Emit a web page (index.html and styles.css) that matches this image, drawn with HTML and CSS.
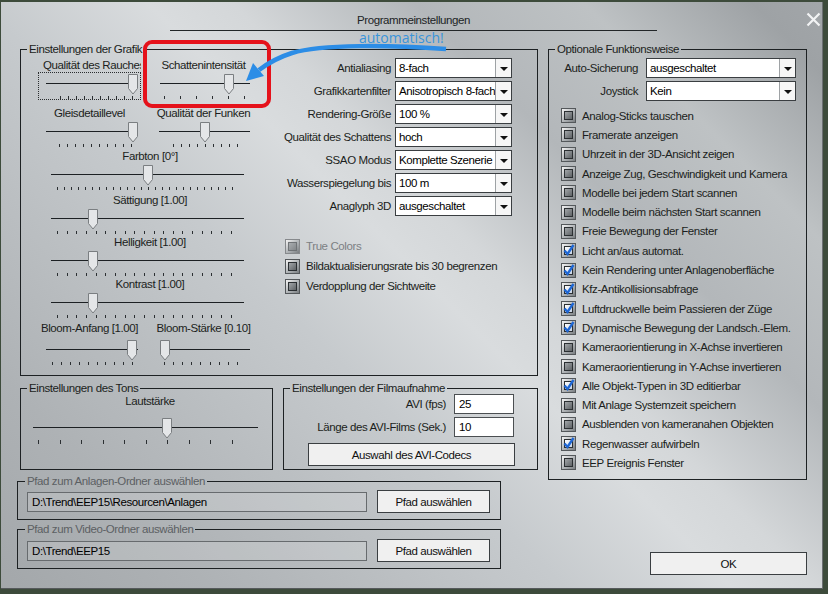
FILE: index.html
```html
<!DOCTYPE html>
<html lang="de">
<head>
  <meta charset="UTF-8">
  <title>Programmeinstellungen</title>
  <link rel="stylesheet" href="styles.css">
</head>
<body>

<div class="dialog">
  <header class="head">
    <h1>Programmeinstellungen</h1>
    <svg class="close" width="15" height="15" viewBox="0 0 15 15"><path d="M1.5 1.5L13.5 13.5M13.5 1.5L1.5 13.5"/></svg>
  </header>

  <div class="main">
    <div class="left">

      <fieldset class="grp grafik">
        <legend>Einstellungen der Grafik</legend>
        <div class="grafik-body">
          <div class="sliders">
            <div class="pair pair-1">
              <div class="cell">
                <div class="lbl lbl-clip">Qualität des Rauches</div>
                <svg class="slider focus" width="103" height="28"><line class="track" x1="8" y1="11.5" x2="100" y2="11.5"/><line class="ticks" x1="22" y1="25.5" x2="95" y2="25.5" stroke-dasharray="1 7"/><path class="thumb" d="M90.5 2.5h9v14l-4.5 5.5l-4.5-5.5z"/></svg>
              </div>
              <div class="cell cell-r">
                <div class="lbl">Schattenintensität</div>
                <svg class="slider" width="97" height="28"><line class="track" x1="5" y1="11.5" x2="95" y2="11.5"/><line class="ticks" x1="9" y1="25.5" x2="90" y2="25.5" stroke-dasharray="1 15"/><path class="thumb" d="M69.5 2.5h9v14l-4.5 5.5l-4.5-5.5z"/></svg>
              </div>
            </div>

            <div class="pair pair-2">
              <div class="cell">
                <div class="lbl">Gleisdetaillevel</div>
                <svg class="slider" width="103" height="28"><line class="track" x1="8" y1="11.5" x2="100" y2="11.5"/><line class="ticks" x1="21" y1="25.5" x2="95" y2="25.5" stroke-dasharray="1 7"/><path class="thumb" d="M90.5 2.5h9v14l-4.5 5.5l-4.5-5.5z"/></svg>
              </div>
              <div class="cell cell-r">
                <div class="lbl">Qualität der Funken</div>
                <svg class="slider" width="97" height="28"><line class="track" x1="4" y1="11.5" x2="95" y2="11.5"/><line class="ticks" x1="18" y1="25.5" x2="83" y2="25.5" stroke-dasharray="1 7"/><path class="thumb" d="M45.5 2.5h9v14l-4.5 5.5l-4.5-5.5z"/></svg>
              </div>
            </div>

            <div class="full full-farbton">
              <div class="lbl">Farbton [0°]</div>
              <svg class="slider" width="206" height="28"><line class="track" x1="4" y1="11.5" x2="197" y2="11.5"/><line class="ticks" x1="10" y1="25.5" x2="186" y2="25.5" stroke-dasharray="1 6"/><path class="thumb" d="M96.5 2.5h9v14l-4.5 5.5l-4.5-5.5z"/></svg>
            </div>

            <div class="full full-s">
              <div class="lbl">Sättigung [1.00]</div>
              <svg class="slider" width="206" height="28"><line class="track" x1="4" y1="11.5" x2="197" y2="11.5"/><line class="ticks" x1="10" y1="25.5" x2="185" y2="25.5" stroke-dasharray="1 8.65"/><path class="thumb" d="M41.5 2.5h9v14l-4.5 5.5l-4.5-5.5z"/></svg>
            </div>

            <div class="full">
              <div class="lbl">Helligkeit [1.00]</div>
              <svg class="slider" width="206" height="28"><line class="track" x1="4" y1="11.5" x2="197" y2="11.5"/><line class="ticks" x1="10" y1="25.5" x2="185" y2="25.5" stroke-dasharray="1 8.65"/><path class="thumb" d="M41.5 2.5h9v14l-4.5 5.5l-4.5-5.5z"/></svg>
            </div>

            <div class="full">
              <div class="lbl">Kontrast [1.00]</div>
              <svg class="slider" width="206" height="28"><line class="track" x1="4" y1="11.5" x2="197" y2="11.5"/><line class="ticks" x1="10" y1="25.5" x2="185" y2="25.5" stroke-dasharray="1 8.65"/><path class="thumb" d="M41.5 2.5h9v14l-4.5 5.5l-4.5-5.5z"/></svg>
            </div>

            <div class="pair pair-bloom">
              <div class="cell">
                <div class="lbl">Bloom-Anfang [1.00]</div>
                <svg class="slider" width="103" height="28"><line class="track" x1="8" y1="11.5" x2="100" y2="11.5"/><line class="ticks" x1="14" y1="25.5" x2="95" y2="25.5" stroke-dasharray="1 7.9"/><path class="thumb" d="M89.5 2.5h9v14l-4.5 5.5l-4.5-5.5z"/></svg>
              </div>
              <div class="cell cell-r">
                <div class="lbl">Bloom-Stärke [0.10]</div>
                <svg class="slider" width="97" height="28"><line class="track" x1="5" y1="11.5" x2="95" y2="11.5"/><line class="ticks" x1="9" y1="25.5" x2="83" y2="25.5" stroke-dasharray="1 8.1"/><path class="thumb" d="M5.5 2.5h9v14l-4.5 5.5l-4.5-5.5z"/></svg>
              </div>
            </div>
          </div>

          <div class="settings">
            <div class="srow"><span>Antialiasing</span><div class="select"><span class="val">8-fach</span><span class="dd"></span></div></div>
            <div class="srow"><span>Grafikkartenfilter</span><div class="select"><span class="val">Anisotropisch 8-fach</span><span class="dd"></span></div></div>
            <div class="srow"><span>Rendering-Größe</span><div class="select"><span class="val">100 %</span><span class="dd"></span></div></div>
            <div class="srow"><span>Qualität des Schattens</span><div class="select"><span class="val">hoch</span><span class="dd"></span></div></div>
            <div class="srow"><span>SSAO Modus</span><div class="select"><span class="val">Komplette Szenerie</span><span class="dd"></span></div></div>
            <div class="srow"><span>Wasserspiegelung bis</span><div class="select"><span class="val">100 m</span><span class="dd"></span></div></div>
            <div class="srow"><span>Anaglyph 3D</span><div class="select"><span class="val">ausgeschaltet</span><span class="dd"></span></div></div>

            <div class="checks checks-mid">
              <div class="chk off"><span class="cb"></span>True Colors</div>
              <div class="chk"><span class="cb"></span>Bildaktualisierungsrate bis 30 begrenzen</div>
              <div class="chk"><span class="cb"></span>Verdopplung der Sichtweite</div>
            </div>
          </div>
        </div>
      </fieldset>

      <div class="row2">
        <fieldset class="grp ton">
          <legend>Einstellungen des Tons</legend>
          <div class="lbl">Lautstärke</div>
          <svg class="slider" width="235" height="29"><line class="track" x1="5" y1="11.5" x2="230" y2="11.5"/><line class="ticks tall" x1="10" y1="26" x2="206" y2="26" stroke-dasharray="1 20.56"/><path class="thumb" d="M134.5 2.5h9v14l-4.5 5.5l-4.5-5.5z"/></svg>
        </fieldset>

        <fieldset class="grp film">
          <legend>Einstellungen der Filmaufnahme</legend>
          <div class="frow"><span>AVI (fps)</span><div class="field">25</div></div>
          <div class="frow frow-2"><span>Länge des AVI-Films (Sek.)</span><div class="field">10</div></div>
          <button class="push codec">Auswahl des AVI-Codecs</button>
        </fieldset>
      </div>

      <fieldset class="grp path">
        <legend>Pfad zum Anlagen-Ordner auswählen</legend>
        <div class="pathrow">
          <div class="field">D:\Trend\EEP15\Resourcen\Anlagen</div>
          <button class="push">Pfad auswählen</button>
        </div>
      </fieldset>

      <fieldset class="grp path video">
        <legend>Pfad zum Video-Ordner auswählen</legend>
        <div class="pathrow">
          <div class="field">D:\Trend\EEP15</div>
          <button class="push">Pfad auswählen</button>
        </div>
      </fieldset>
    </div>

    <div class="right">
      <fieldset class="grp optional">
        <legend>Optionale Funktionsweise</legend>
        <div class="srow"><span>Auto-Sicherung</span><div class="select"><span class="val">ausgeschaltet</span><span class="dd"></span></div></div>
        <div class="srow"><span>Joystick</span><div class="select"><span class="val">Kein</span><span class="dd"></span></div></div>

        <div class="checks">
          <div class="chk"><span class="cb"></span>Analog-Sticks tauschen</div>
          <div class="chk"><span class="cb"></span>Framerate anzeigen</div>
          <div class="chk"><span class="cb"></span>Uhrzeit in der 3D-Ansicht zeigen</div>
          <div class="chk"><span class="cb"></span>Anzeige Zug, Geschwindigkeit und Kamera</div>
          <div class="chk"><span class="cb"></span>Modelle bei jedem Start scannen</div>
          <div class="chk"><span class="cb"></span>Modelle beim nächsten Start scannen</div>
          <div class="chk"><span class="cb"></span>Freie Bewegung der Fenster</div>
          <div class="chk"><span class="cb on"><svg viewBox="0 0 15 15"><path d="M3.5 7.5l3 3.5l6-9"/></svg></span>Licht an/aus automat.</div>
          <div class="chk"><span class="cb on"><svg viewBox="0 0 15 15"><path d="M3.5 7.5l3 3.5l6-9"/></svg></span>Kein Rendering unter Anlagenoberfläche</div>
          <div class="chk"><span class="cb on"><svg viewBox="0 0 15 15"><path d="M3.5 7.5l3 3.5l6-9"/></svg></span>Kfz-Antikollisionsabfrage</div>
          <div class="chk"><span class="cb on"><svg viewBox="0 0 15 15"><path d="M3.5 7.5l3 3.5l6-9"/></svg></span>Luftdruckwelle beim Passieren der Züge</div>
          <div class="chk"><span class="cb on"><svg viewBox="0 0 15 15"><path d="M3.5 7.5l3 3.5l6-9"/></svg></span>Dynamische Bewegung der Landsch.-Elem.</div>
          <div class="chk"><span class="cb"></span>Kameraorientierung in X-Achse invertieren</div>
          <div class="chk"><span class="cb"></span>Kameraorientierung in Y-Achse invertieren</div>
          <div class="chk"><span class="cb on"><svg viewBox="0 0 15 15"><path d="M3.5 7.5l3 3.5l6-9"/></svg></span>Alle Objekt-Typen in 3D editierbar</div>
          <div class="chk"><span class="cb"></span>Mit Anlage Systemzeit speichern</div>
          <div class="chk"><span class="cb"></span>Ausblenden von kameranahen Objekten</div>
          <div class="chk"><span class="cb on"><svg viewBox="0 0 15 15"><path d="M3.5 7.5l3 3.5l6-9"/></svg></span>Regenwasser aufwirbeln</div>
          <div class="chk"><span class="cb"></span>EEP Ereignis Fenster</div>
        </div>
      </fieldset>

      <button class="push ok">OK</button>
    </div>
  </div>

  <!-- annotation drawn over the dialog -->
  <div class="note-box"></div>
  <svg class="note-arrow" width="225" height="50" viewBox="0 0 225 50">
    <path class="shaft" d="M216 9C160 5 92 4 62 13C46 18 37 24 29 30"/>
    <polygon points="16,41 34,36 23,23"/>
  </svg>
  <span class="note-text">automatisch!</span>
</div>

</body>
</html>
```

FILE: styles.css
```css
body {
  margin: 0;
  background: #3d4b3b;
  font-family: "Liberation Sans", Arial, sans-serif;
  font-size: 11.5px;
  letter-spacing: -0.4px;
  color: #1b1e20;
}

.dialog {
  position: relative;
  margin: 2px 0 0 1px;
  width: 822px;
  height: 587px;
  box-sizing: border-box;
  border-right: 1px solid #6b6f72;
  border-bottom: 1px solid #55595b;
  background: linear-gradient(45deg, #a3a7aa 0%, #aeb2b5 15%, #c6cacd 40%, #d9dcde 52%, #d4d7d9 58%, #b3b7ba 71%, #bec2c4 83%, #9ea2a5 95%, #a2a6a9 100%);
}

/* title */
.head {
  display: flex;
  align-items: flex-start;
}

.head h1 {
  margin: 11px 0 0 169px;
  width: 487px;
  padding-bottom: 3px;
  border-bottom: 1px solid #222628;
  font-size: 11.5px;
  font-weight: normal;
  line-height: 14px;
  text-align: center;
  color: #202325;
}

.close {
  margin: 10px 1px 0 auto;
}

.close path {
  stroke: #f2f3f4;
  stroke-width: 2.2;
}

/* layout */
.main {
  display: flex;
  gap: 10px;
  padding: 12px 0 0 19px;
}

.left {
  width: 518px;
}

.right {
  width: 259px;
}

/* group boxes */
.grp {
  margin: 0;
  padding: 0;
  min-width: 0;
  box-sizing: border-box;
  border: 1px solid #1d2123;
}

.grp legend {
  margin-left: 6px;
  padding: 0 2px;
  line-height: 12px;
  white-space: nowrap;
}

.grafik {
  height: 333px;
}

.grafik-body {
  display: flex;
}

.sliders {
  width: 259px;
}

.lbl {
  line-height: 14px;
  white-space: nowrap;
  text-align: center;
}

.slider {
  display: block;
}

.track {
  stroke: #1c2023;
  shape-rendering: crispEdges;
}

.ticks {
  stroke: #2b2f32;
  stroke-width: 3;
  shape-rendering: crispEdges;
}

.ticks.tall {
  stroke-width: 4;
}

.thumb {
  fill: #e4e6e8;
  stroke: #7a7e81;
}

.focus {
  outline: 1px dotted #2a2d2f;
  outline-offset: -1px;
}

.pair {
  display: flex;
  gap: 14px;
  margin-left: 17px;
}

.pair .cell {
  width: 103px;
  overflow: hidden;
}

.pair .cell-r {
  width: 97px;
}

.lbl-clip {
  text-align: left;
  padding-left: 5px;
}

.pair-1 { margin-top: 3px; }
.pair-2 { margin-top: 6px; }
.pair-bloom { margin-top: 2px; }
.pair-bloom .slider { margin-top: 3px; }

.full {
  width: 206px;
  margin-left: 26px;
}

.full-farbton { margin-top: 1px; }
.full-s { margin-top: 2px; }

/* combo boxes */
.settings {
  flex: 1;
  padding-top: 3px;
}

.srow {
  display: flex;
  justify-content: flex-end;
  align-items: center;
  height: 20px;
  margin-bottom: 3px;
  padding-right: 25px;
  white-space: nowrap;
}

.select {
  display: flex;
  width: 117px;
  height: 20px;
  margin-left: 4px;
  box-sizing: border-box;
  border: 1px solid #3a3e41;
  background: #fff;
  color: #000;
}

.select .val {
  flex: 1;
  padding-left: 3px;
  line-height: 18px;
  overflow: hidden;
  white-space: nowrap;
}

.select .dd {
  width: 15px;
  display: flex;
  align-items: center;
  justify-content: center;
  border-left: 1px solid #9ea2a5;
  background: #f6f6f6;
}

.select .dd::after {
  content: "";
  border-left: 4px solid transparent;
  border-right: 4px solid transparent;
  border-top: 4px solid #111;
  margin-top: 1px;
}

.optional {
  height: 437px;
  padding-top: 3px;
}

.optional .srow {
  padding-right: 10px;
}

.optional .select {
  width: 150px;
  margin-left: 8px;
}

/* check boxes */
.checks {
  margin-top: 5px;
  padding-left: 12px;
}

.checks-mid {
  margin-top: 20px;
  padding-left: 5px;
}

.chk {
  display: flex;
  align-items: center;
  gap: 6px;
  height: 20px;
  white-space: nowrap;
}

.optional .chk {
  height: 19.3px;
}

.cb {
  position: relative;
  flex: none;
  width: 15px;
  height: 15px;
  box-sizing: border-box;
  padding: 2px;
  border: 1px solid #54585b;
  background: linear-gradient(135deg, #f4f4f4, #aeb2b5 55%, #7a7e81);
}

.cb::before {
  content: "";
  display: block;
  height: 100%;
  box-sizing: border-box;
  border: 1px solid #2b2f32;
  background: linear-gradient(135deg, #a2a6a9, #5f6366);
}

.cb.on::before {
  background: linear-gradient(135deg, #ffffff, #c8d5e6);
}

.cb svg {
  position: absolute;
  left: -1px;
  top: -1px;
  width: 15px;
  height: 15px;
}

.cb path {
  fill: none;
  stroke: #1f67d4;
  stroke-width: 2.4;
}

.chk.off {
  color: #7c8083;
}

.chk.off .cb {
  border-color: #86898c;
}

.chk.off .cb::before {
  border-color: #6f7376;
  background: linear-gradient(135deg, #a9adb0, #83878a);
}

/* sound + film */
.row2 {
  display: flex;
  gap: 10px;
  margin-top: 6px;
}

.ton {
  width: 253px;
  height: 88px;
}

.ton .lbl {
  padding-left: 7px;
}

.ton .slider {
  margin: 8px 0 0 7px;
}

.film {
  width: 255px;
  height: 88px;
}

.frow {
  display: flex;
  justify-content: flex-end;
  align-items: center;
  padding-right: 23px;
}

.frow span {
  margin-right: 8px;
}

.frow-2 {
  margin-top: 3px;
}

.field {
  height: 20px;
  box-sizing: border-box;
  border: 1px solid #4b4f52;
  background: #fff;
  color: #000;
  padding-left: 4px;
  line-height: 18px;
  white-space: nowrap;
}

.frow .field {
  width: 60px;
}

.push {
  display: block;
  padding: 0;
  box-sizing: border-box;
  border: 1px solid #3a3e41;
  background: #f0f0f0;
  font: inherit;
  letter-spacing: inherit;
  color: #111;
}

.codec {
  width: 207px;
  height: 23px;
  margin: 6px 0 0 24px;
}

/* folder paths */
.path {
  width: 484px;
  height: 45px;
  margin: 5px 0 0 -3px;
}

.path legend {
  margin-left: 7px;
  color: #5c6063;
}

.path.video {
  height: 46px;
  margin-top: 3px;
}

.pathrow {
  display: flex;
  align-items: center;
  gap: 10px;
  margin-top: 3px;
  padding-left: 9px;
}

.video .pathrow {
  margin-top: 4px;
}

.pathrow .field {
  width: 340px;
  border-color: #676b6e;
  background: rgba(255, 255, 255, 0.14);
}

.pathrow .push {
  width: 113px;
  height: 23px;
}

/* right column */
.ok {
  width: 157px;
  height: 23px;
  margin: 72px 0 0 102px;
}

/* annotation */
.note-box {
  position: absolute;
  left: 142px;
  top: 38px;
  width: 128px;
  height: 68px;
  box-sizing: border-box;
  border: 4px solid #e5121b;
  border-radius: 9px;
}

.note-arrow {
  position: absolute;
  left: 229px;
  top: 38px;
}

.note-arrow .shaft {
  fill: none;
  stroke: #2c8de6;
  stroke-width: 4.5;
}

.note-arrow polygon {
  fill: #2c8de6;
}

.note-text {
  position: absolute;
  left: 358px;
  top: 28px;
  font-family: "Open Sans", sans-serif;
  font-size: 14px;
  line-height: 16px;
  letter-spacing: 0;
  color: #3a94da;
}
```
